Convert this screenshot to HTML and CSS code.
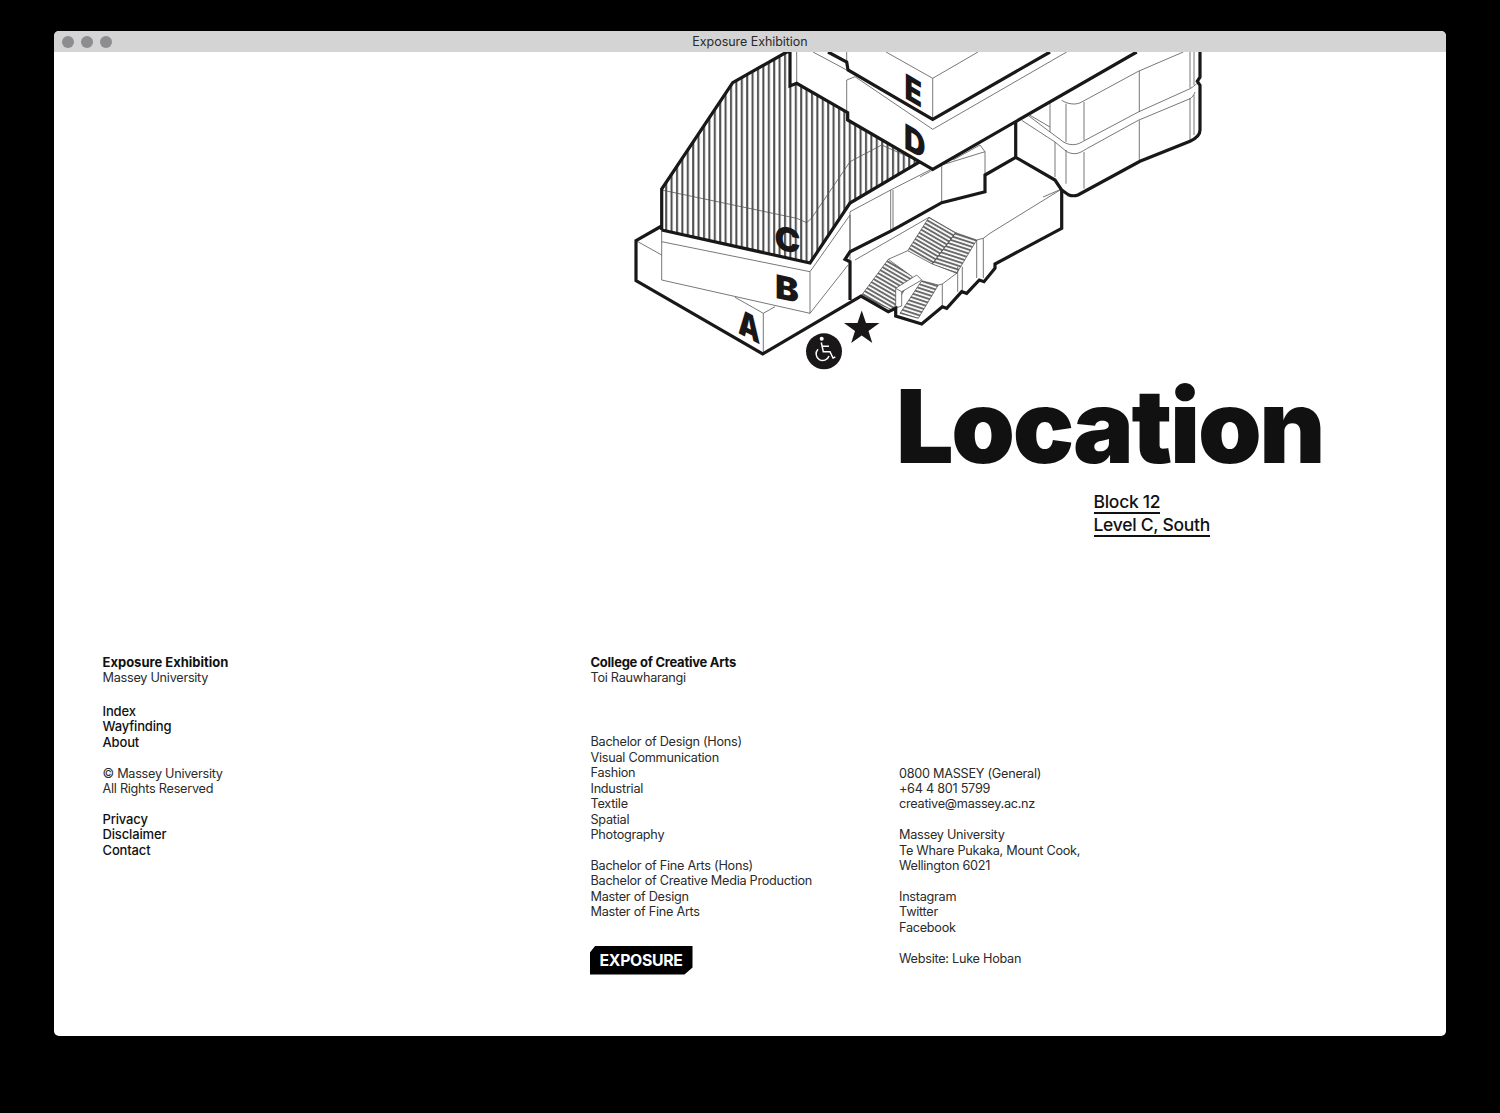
FILE: index.html
```html
<!DOCTYPE html>
<html lang="en">
<head>
<meta charset="utf-8">
<title>Exposure Exhibition</title>
<link rel="stylesheet" href="styles.css">
</head>
<body>
<div class="window">
  <header class="titlebar">
    <div class="dots"><span class="dot"></span><span class="dot"></span><span class="dot"></span></div>
    <div class="window-title">Exposure Exhibition</div>
  </header>
  <main class="page">
    <svg class="map" viewBox="620 52 600 320" width="600" height="320" aria-label="Map of Block 12">
      <defs>
        <pattern id="hatch" width="5.4" height="10" patternUnits="userSpaceOnUse"><line x1="2" y1="0" x2="2" y2="10" class="hatch-line"/></pattern>
        <pattern id="steps" width="10" height="3.7" patternUnits="userSpaceOnUse" patternTransform="rotate(30)"><line x1="0" y1="1" x2="10" y2="1" class="step-line"/></pattern>
        <pattern id="steps2" width="10" height="3.7" patternUnits="userSpaceOnUse" patternTransform="rotate(18)"><line x1="0" y1="1" x2="10" y2="1" class="step-line"/></pattern>
      </defs>

      <path class="hatched" d="M661.7 189 732.7 82.7 786.7 52 790 52V86L796.7 83.3 847.7 112.7V120L920 162 850 203 810 263 661.7 230Z"/>

      <g class="thin">
        <path d="M661.7 190 796.7 218.3M811.7 218 850 161.7 881.7 145 920 162M850 161.7V203M796.7 218.3 806.7 222.7 811.7 218"/>
        <path d="M796.7 52V83.3M813 52 846.7 70M846.7 52V62M846.7 80V120M846.7 80 855 76.7 932.7 129.3 1066.7 52M886 52 932.7 78.3 978 52M932.7 78.3V119.3"/>
        <path d="M661.7 230V280L810 313.3V271.7L661.7 241.7M636 240.7 661.7 255M735 297.3 763.3 313.3 775 306.7M763.3 313.3V354M810 271.7 850 215V260M810 313.3 848 265"/>
        <path d="M850 211.7 890.7 190 930 170M850 211.7V251.7M890.7 190V230M893 190V230M941.7 165V202.7M920 177 941.7 165 985 151.7 980 145 953 160M985 151.7V175"/>
        <path d="M855 260 929 217.3M907.7 250.7 888.3 259.3M957 273 942.3 284 938.3 285M942.3 284V306.7M957.7 266.7V291.7M962.3 266.7V290M976.7 240V278M983.3 238.3V278M976.7 240 983.3 238.3 990 233.3 1061.7 189 1043 197"/>
        <path d="M1061.7 100.3C1066 103 1070 104 1074 104 1077 104 1079.5 103.2 1081.7 102L1138.3 71.3 1183.3 52"/>
        <path d="M1030 115.3 1050 127M1028 115.3 1050 132 1060 139.3C1064 143 1068 144.7 1073.3 144.7 1078 144.7 1082 142 1085 140.3L1138.3 112 1190 88.7C1193 87 1195 85 1196.7 83.7"/>
        <path d="M1021.7 120.3 1055 142 1065 150.3C1068 152.7 1071 153.7 1075 153.7 1079 153.7 1083 151 1086.7 148.7L1138.3 120.3 1190 98.7C1192 97.5 1194 95 1195 92"/>
        <path d="M1050 103V132M1066 103.7V142M1084 102V140.3M1139.3 71V112M1139.3 120.3V160.3M1055 142V177M1066 150V183.7M1084 152V188.7M1190 52V88M1194 52V85M1190 98V140M1194 95V135"/>
      </g>

      <path class="stair" fill="url(#steps)" d="M929 217.3 955.7 232.7 932.3 264 907.7 250.7Z"/>
      <path class="stair" fill="url(#steps2)" d="M955.7 232.7 976.7 240 956.7 273.3 932.3 264Z"/>
      <path class="stair" fill="url(#steps)" d="M888.3 259.3 912.3 276.7 892.3 310 861 296Z"/>
      <path class="stair" fill="url(#steps2)" d="M921.7 280.7 938.3 285 918.3 318.3 900 313.3Z"/>
      <path class="block" d="M895.7 288.3 916.7 275 921.7 280 901.7 291.7 901.7 306 895.7 308Z"/>
      <path class="block-line" d="M895.7 288.3 901.7 291.7"/>

      <g class="thick">
        <path d="M661.7 230V189L732.7 82.7 786.7 52H790V86L796.7 83.3 847.7 112.7V120L932.7 169.3 1136.7 52"/>
        <path d="M828 52 846.7 62 848 70 932.7 119.3 1050 52"/>
        <path d="M920 161.7 850 203 810 263 661.7 230"/>
        <path d="M661.7 226 636 240.7V280.7L762.7 354 861 296 888.3 311.7 895.7 308.3V316L921.7 324 942.3 306.7 946.7 308.3 961.7 291.7 966.7 293.3 979.3 280 984 281.7 995 268.3V264L1061.7 228.3V190L1055 180 1015.7 157.3V121.7M1015.7 157.3 985 175V191.7L941.7 202.7 891.7 230.7 850 251.7 845 259.3 850 261.7V300"/>
        <path d="M1061.7 190 1068.3 194.7C1071 195.8 1075 196 1078 195L1140 161.3 1190 141.3C1197 138 1200 135 1200 130V85.3L1197.3 81.3 1200 77V52"/>
      </g>

      <g class="letters">
        <text class="letter letter-tall" transform="matrix(.82 .48 0 1 904.5 98)">E</text>
        <text class="letter letter-tall" transform="matrix(.85 .48 0 1 904 148)">D</text>
        <text class="letter" transform="matrix(1.05 .2 0 1 774.5 249)">C</text>
        <text class="letter" transform="matrix(1.08 .22 0 1 775 298)">B</text>
        <text class="letter letter-tall" transform="matrix(.8 .42 0 1 738 333)">A</text>
      </g>

      <path class="solid" d="M861.7 310.5 866 323 879.5 323 868.5 331 872.3 343 861.7 335.5 851.2 343 855 331 844 323 857.5 323Z"/>
      <circle class="solid" cx="824" cy="351.3" r="18"/>
      <circle class="glyph-dot" cx="821.7" cy="338.7" r="2"/>
      <path class="glyph" d="M821.3 342.5 823.3 351.7H830L833 358 835.3 357M822.3 346.3H829M818 349.3A6.6 6.6 0 1 0 829 356"/>
    </svg>

    <section class="location">
      <h1 class="heading">Location</h1>
      <div class="place">
        <a class="place-line">Block 12</a>
        <a class="place-line">Level C, South</a>
      </div>
    </section>

    <footer class="footer">
      <div class="col">
        <p class="group-head"><b class="strong">Exposure Exhibition</b><br>Massey University</p>
        <p class="group links">Index<br>Wayfinding<br>About</p>
        <p class="group">© Massey University<br>All Rights Reserved</p>
        <p class="group links">Privacy<br>Disclaimer<br>Contact</p>
      </div>
      <div class="col">
        <p class="group-head college"><b class="strong">College of Creative Arts</b><br>Toi Rauwharangi</p>
        <p class="group">Bachelor of Design (Hons)<br>Visual Communication<br>Fashion<br>Industrial<br>Textile<br>Spatial<br>Photography</p>
        <p class="group">Bachelor of Fine Arts (Hons)<br>Bachelor of Creative Media Production<br>Master of Design<br>Master of Fine Arts</p>
        <div class="logo">EXPOSURE</div>
      </div>
      <div class="col col-contact">
        <p class="group">0800 MASSEY (General)<br>+64 4 801 5799<br>creative@massey.ac.nz</p>
        <p class="group">Massey University<br>Te Whare Pukaka, Mount Cook,<br>Wellington 6021</p>
        <p class="group">Instagram<br>Twitter<br>Facebook</p>
        <p class="group">Website: Luke Hoban</p>
      </div>
    </footer>
  </main>
</div>
</body>
</html>
```

FILE: styles.css
```css
* { box-sizing: border-box; }
html, body { margin: 0; padding: 0; }
body {
  height: 1113px;
  background: #000;
  padding: 31px 54px 77px;
  font-family: Inter, "Liberation Sans", sans-serif;
  color: #222;
  overflow: hidden;
}
.window {
  height: 1005px;
  background: #fff;
  border-radius: 5px;
  overflow: hidden;
  display: flex;
  flex-direction: column;
}
.titlebar {
  height: 21px;
  flex: none;
  background: #d4d4d4;
  display: grid;
  grid-template-columns: 1fr;
  align-items: center;
}
.dots, .window-title { grid-area: 1 / 1; }
.dots { display: flex; gap: 6.5px; padding-left: 7.5px; }
.dot { width: 12.5px; height: 12.5px; border-radius: 50%; background: #8d8d90; }
.window-title { text-align: center; font-size: 12.5px; line-height: 22px; letter-spacing: -.05px; color: #2a2a2a; }
.page { flex: 1; padding-left: 48.5px; }

.map { display: block; margin-left: 517.5px; overflow: hidden; }
.hatched { fill: url(#hatch); }
.hatch-line { stroke: #4a4a4a; stroke-width: 2; }
.step-line { stroke: #666; stroke-width: 1.9; }
.thin path, .block, .block-line { fill: none; stroke: #555; stroke-width: .8; }
.stair { stroke: #444; stroke-width: .7; }
.block { fill: #fff; }
.thick path { fill: none; stroke: #1a1718; stroke-width: 3.2; stroke-linejoin: miter; }
.letter { font-family: Inter, "Liberation Sans", sans-serif; font-weight: 900; font-size: 33px; fill: #1a1718; }
.letter-tall { font-size: 35px; }
.solid { fill: #1a1718; }
.glyph-dot { fill: #fff; }
.glyph { fill: none; stroke: #fff; stroke-width: 1.5; }

.location { padding-left: 796.5px; padding-top: 4px; }
.heading {
  margin: 0 0 0 -3px;
  font-size: 102px;
  line-height: 100px;
  font-weight: 900;
  letter-spacing: -2.3px;
  color: #111;
  white-space: nowrap;
}
.place { margin-left: 194.5px; margin-top: 15px; display: flex; flex-direction: column; align-items: flex-start; }
.place-line {
  font-size: 17.5px;
  line-height: 21px;
  height: 23px;
  font-weight: 500;
  letter-spacing: -.28px;
  color: #111;
  border-bottom: 2px solid #111;
}

.footer {
  margin-top: 118px;
  display: grid;
  grid-template-columns: 488px 308.5px 1fr;
  font-size: 12.7px;
  letter-spacing: -.27px;
  line-height: 15.43px;
  color: #2b2b2b;
}
.col p { margin: 0; }
.col .group-head { margin-bottom: 18px; }
.col .college { margin-bottom: 48.5px; }
.col .group { margin-bottom: 15.43px; }
.col-contact { padding-top: 110.5px; }
.strong { font-size: 13px; font-weight: 700; letter-spacing: 0; color: #111; }
.college .strong { letter-spacing: -.25px; }
.links { font-size: 13px; font-weight: 500; letter-spacing: -.15px; color: #111; }
.logo {
  margin-top: 26px;
  margin-left: -1px;
  width: 103px;
  height: 29px;
  background: #000;
  color: #fff;
  font-weight: 700;
  font-size: 15.8px;
  letter-spacing: -.3px;
  line-height: 29px;
  padding-left: 10px;
  clip-path: polygon(0 7.5px, 6px 0, 100% 0, 100% 22px, 95px 100%, 0 100%);
}
```
